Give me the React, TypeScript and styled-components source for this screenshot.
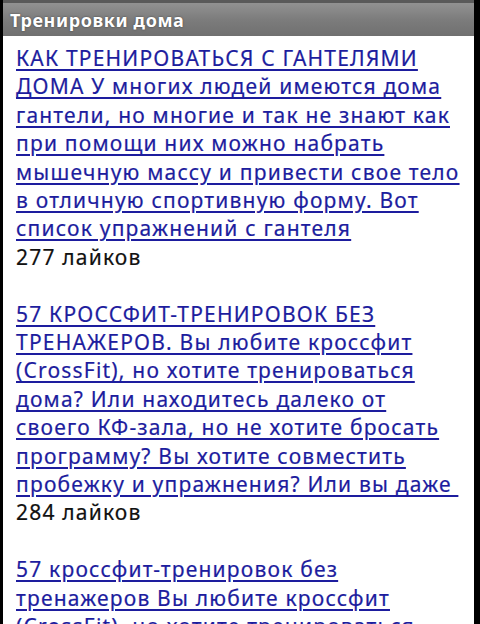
import React from "react";
import styled, { createGlobalStyle } from "styled-components";

const Global = createGlobalStyle`
  html, body { margin: 0; padding: 0; background: #000; }
  body { font-family: "Noto Sans", "Open Sans", sans-serif; }
`;

const Frame = styled.div`
  width: 480px;
  height: 624px;
  box-sizing: border-box;
  border-left: 3px solid #000;
  border-right: 6px solid #000;
  background: #fff;
  overflow: hidden;
  display: flex;
  flex-direction: column;
`;

const TitleBar = styled.div`
  height: 36px;
  flex: none;
  box-sizing: border-box;
  border-top: 3px solid #5a5a5a;
  background: linear-gradient(#929292, #7c7c7c 50%, #707070);
  display: flex;
  align-items: center;
  padding-left: 7px;
  color: #fff;
  font-family: "Noto Sans", "Open Sans", sans-serif;
  font-weight: 700;
  font-size: 18px;
  letter-spacing: 0.6px;
  text-shadow: 0 0 2px rgba(0, 0, 0, 0.5);
`;

const Content = styled.div`
  padding: 8px 12px 0 13px;
  font-family: "Noto Sans", "Open Sans", sans-serif;
  font-size: 21px;
  letter-spacing: 1.2px;
  line-height: 28.4px;
  color: #111;
  -webkit-text-stroke: 0.2px currentColor;
`;

const Item = styled.div`
  margin-bottom: 28.4px;
`;

const Link = styled.a`
  color: #1d1d9e;
  text-decoration: underline;
  text-underline-offset: 3px;
`;

const Likes = styled.div``;

const items = [
  {
    text: "КАК ТРЕНИРОВАТЬСЯ С ГАНТЕЛЯМИ ДОМА У многих людей имеются дома гантели, но многие и так не знают как при помощи них можно набрать мышечную массу и привести свое тело в отличную спортивную форму. Вот список упражнений с гантеля",
    likes: "277 лайков",
  },
  {
    text: "57 КРОССФИТ-ТРЕНИРОВОК БЕЗ ТРЕНАЖЕРОВ. Вы любите кроссфит (CrossFit), но хотите тренироваться дома? Или находитесь далеко от своего КФ-зала, но не хотите бросать программу? Вы хотите совместить пробежку и упражнения? Или вы даже\u00a0",
    likes: "284 лайков",
  },
  {
    text: "57 кроссфит-тренировок без тренажеров Вы любите кроссфит (CrossFit), но хотите тренироваться дома? Или находитесь далеко от своего КФ-зала, но не хотите бросать программу?",
    likes: "263 лайков",
  },
];

export default function App() {
  return (
    <>
      <Global />
      <Frame>
        <TitleBar>Тренировки дома</TitleBar>
        <Content>
          {items.map((it, i) => (
            <Item key={i}>
              <Link href="#">{it.text}</Link>
              <Likes>{it.likes}</Likes>
            </Item>
          ))}
        </Content>
      </Frame>
    </>
  );
}
